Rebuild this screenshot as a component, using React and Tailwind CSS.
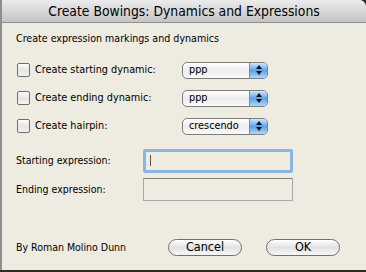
import React from 'react';

const FONT = { fontFamily: '"Lucida Grande", "DejaVu Sans Condensed", "DejaVu Sans", sans-serif' };

const Checkbox = () => (
  <span className="w-[13px] h-[14px] rounded-[2px] border border-[#6f6f6f] bg-gradient-to-b from-[#fdfdfd] via-[#e4e4e4] to-[#f4f4f4] shrink-0" />
);

const Popup = ({ value }) => (
  <div className="relative w-[86px] h-[17px] rounded-[5px] border border-[#7d7d7d] bg-gradient-to-b from-[#ffffff] via-[#ececec] to-[#fafafa] flex items-center overflow-hidden">
    <span className="pl-[6px] text-[10.8px] text-black flex-1 leading-none">{value}</span>
    <span className="w-[18px] h-full bg-gradient-to-b from-[#cfe6fb] via-[#5aa1ea] to-[#aed8fb] border-l border-[#6b8fb8] flex flex-col items-center justify-center gap-[2px]">
      <svg width="6" height="4" viewBox="0 0 6 4"><path d="M3 0 L6 4 L0 4 Z" fill="#111" /></svg>
      <svg width="6" height="4" viewBox="0 0 6 4"><path d="M0 0 L6 0 L3 4 Z" fill="#111" /></svg>
    </span>
  </div>
);

const Row = ({ label, value }) => (
  <div className="flex items-center h-[17px]">
    <div className="flex items-center gap-[5px] w-[182px] pl-[17px]">
      <Checkbox />
      <span className="text-[10.8px] text-black whitespace-nowrap">{label}</span>
    </div>
    <Popup value={value} />
  </div>
);

const Button = ({ children }) => (
  <div className="w-[74px] h-[17px] rounded-full border border-[#6f6f6f] bg-gradient-to-b from-[#ffffff] via-[#e2e2e2] to-[#f8f8f8] flex items-center justify-center text-[12.5px] text-black leading-none">
    {children}
  </div>
);

export default function App() {
  return (
    <div className="w-[366px] h-[272px] bg-[#2a2a2a] overflow-hidden" style={FONT}>
      <div className="w-[366px] h-[270px] bg-[#eeebe0] rounded-tr-[7px] border-l-[2px] border-[#8d8d8d] flex flex-col">
        <div className="h-[23px] rounded-tr-[7px] bg-gradient-to-b from-[#ececec] to-[#c4c4c4] border-b border-[#8e8e8e] flex items-center justify-center text-[13.8px] text-black">
          Create Bowings: Dynamics and Expressions
        </div>
        <div className="pl-[14px] pt-[8px] text-[10.6px] text-black">Create expression markings and dynamics</div>
        <div className="flex flex-col gap-[11px] pt-[15px] -ml-[2px]">
          <Row label="Create starting dynamic:" value="ppp" />
          <Row label="Create ending dynamic:" value="ppp" />
          <Row label="Create hairpin:" value="crescendo" />
        </div>
        <div className="flex flex-col gap-[5px] pt-[14px] pl-[14px]">
          <div className="flex items-center">
            <span className="w-[127px] text-[10.5px] text-black">Starting expression:</span>
            <div className="w-[150px] h-[24px] rounded-[2px] border-[3px] border-[#8ab4e3] bg-[#eeebe0] flex items-center pl-[4px]">
              <span className="w-[1px] h-[11px] bg-[#555]" />
            </div>
          </div>
          <div className="flex items-center">
            <span className="w-[127px] text-[10.5px] text-black">Ending expression:</span>
            <div className="w-[150px] h-[23px] border border-[#a9a9a9] border-t-[#7f7f7f] bg-[#eeebe0]" />
          </div>
        </div>
        <div className="flex items-center pt-[38px] pl-[14px]">
          <span className="w-[152px] text-[10.5px] text-black">By Roman Molino Dunn</span>
          <Button>Cancel</Button>
          <span className="w-[24px]" />
          <Button>OK</Button>
        </div>
      </div>
    </div>
  );
}
